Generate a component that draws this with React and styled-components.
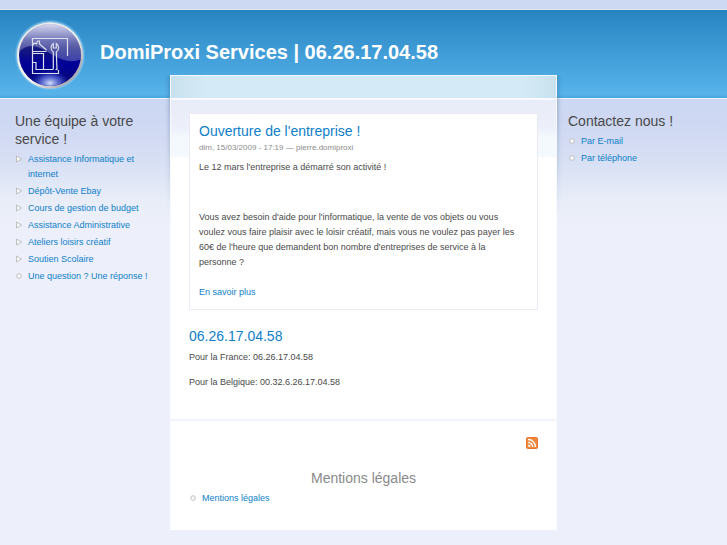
import React from 'react';
import styled, { createGlobalStyle } from 'styled-components';

const Global = createGlobalStyle`
  * { box-sizing: border-box; }
  body {
    margin: 0;
    background: #edf0fa;
    color: #494949;
    font: 9px/15px "Liberation Sans", Arial, Helvetica, sans-serif;
  }
  h1, h2, p, ul { margin: 0; padding: 0; font-weight: normal; }
`;

const Page = styled.div`
  min-height: 100vh;
  background: linear-gradient(
    #cdd8f2 0, #cdd8f2 9px, #e2e8f3 9px, #e2e8f3 10px,
    #2582bc 10px, #2d89c6 18px, #57b3ea 94px, #4ba5dc 98px,
    #f1f6fc 98px, #f1f6fc 99px, #ccd7f2 99px, #ced8f2 122px,
    #d7dff4 160px, #dfe6f6 180px, #e8edf8 200px, #edf0fa 225px, #edf0fa 100%
  );
`;

const Header = styled.header`
  display: flex;
  align-items: flex-start;
  gap: 14px;
  height: 98px;
  padding: 20px 15px 0;
`;

const SiteName = styled.h1`
  padding-top: 20px;
  font-size: 20px;
  line-height: 24px;
  a { color: #fff; font-weight: bold; text-decoration: none; }
`;

const Columns = styled.div`
  display: grid;
  grid-template-columns: 170px minmax(0, 1fr) 170px;
  align-items: start;
  margin-top: -23px;
  padding-bottom: 14px;
`;

const Sidebar = styled.aside`
  padding: ${(p) => (p.$right ? '37px 15px 0 11px' : '37px 18px 0 15px')};
`;

const Title = styled.h2`
  font-size: 14px;
  line-height: 18px;
  color: ${(p) => (p.$muted ? '#898989' : '#494949')};
  text-align: ${(p) => (p.$muted ? 'center' : 'left')};
`;

const Link = styled.a`
  color: #0f80c8;
  text-decoration: none;
`;

const Menu = styled.ul`
  display: grid;
  gap: 2px;
  margin-top: 4px;
  list-style: none;
`;

const MenuItem = styled.li`
  display: flex;
  gap: 5px;
  svg { flex: none; margin-top: 3px; }
`;

const Panel = styled.main`
  position: relative;
  border: solid #f8faff;
  border-width: 1px 1px 0;
  background:
    linear-gradient(90deg, rgba(185, 212, 225, 0.45), transparent 35px, transparent calc(100% - 35px), rgba(185, 212, 225, 0.45)) 0 0 / 100% 22px no-repeat,
    linear-gradient(#d5eaf7 0, #d5eaf7 22px, #f8faff 22px, #f8faff 24px, #e8ecf8 24px, #edf0fa 52px, #f4f9fd 62px, #f4f9fd 81px, #fff 81px);
  &::before {
    content: "";
    position: absolute;
    inset: -1px -1px auto;
    height: 140px;
    box-shadow: 0 0 5px rgba(30, 75, 120, 0.5);
    clip-path: inset(-6px -6px 0);
    mask-image: linear-gradient(#000 20px, transparent);
    mask-clip: no-clip;
    pointer-events: none;
  }
`;

const Content = styled.div`
  padding: 37px 18px 29px;
`;

const Card = styled.article`
  padding: 8px 14px 9px 9px;
  border: 1px solid #e9eaf6;
  background: #fff;
`;

const NodeTitle = styled.h2`
  font-size: 14px;
  line-height: 19px;
`;

const Meta = styled.div`
  font-size: 8px;
  line-height: 13px;
  color: #8c8c8c;
`;

const Text = styled.p`
  margin-top: ${(p) => p.$gap || 0}px;
`;

const Plain = styled.section`
  padding-top: 17px;
`;

const Footer = styled.footer`
  padding: 16px 18px 24px;
  border-top: 2px solid #f2f4fb;
`;

const FeedRow = styled.div`
  display: flex;
  justify-content: flex-end;
  margin-bottom: 20px;
  a { display: block; height: 12px; }
  svg { display: block; }
`;

const Bullet = ({ arrow }) => (
  <svg width="8" height="8" viewBox="0 0 8 8" fill="#fafbfc" stroke="#bfbfbf" aria-hidden="true">
    {arrow ? <path d="M1.500 1v6L6.500 4z" strokeLinejoin="round" /> : <circle cx="4" cy="4" r="2.300" />}
  </svg>
);

const Logo = () => (
  <svg width="71" height="71" viewBox="0 0 71 71" role="img" aria-label="Accueil">
    <defs>
      <radialGradient id="halo">
        <stop offset="0.9" stopColor="#c5e8fb" stopOpacity="0.9" />
        <stop offset="1" stopColor="#8fcdf0" stopOpacity="0" />
      </radialGradient>
      <linearGradient id="rim" x1="0" y1="0" x2="1" y2="1">
        <stop offset="0" stopColor="#e9e6e2" />
        <stop offset="0.55" stopColor="#f7f5ef" />
        <stop offset="1" stopColor="#817f92" />
      </linearGradient>
      <linearGradient id="ball" x1="0" y1="0" x2="0" y2="1">
        <stop offset="0" stopColor="#8a8fca" />
        <stop offset="0.4" stopColor="#15187c" />
        <stop offset="0.65" stopColor="#000098" />
        <stop offset="1" stopColor="#080870" />
      </linearGradient>
      <linearGradient id="gloss" x1="0" y1="0" x2="0" y2="1">
        <stop offset="0" stopColor="#fff" stopOpacity="0.8" />
        <stop offset="0.5" stopColor="#aeb3dd" stopOpacity="0.45" />
        <stop offset="1" stopColor="#9298d0" stopOpacity="0.4" />
      </linearGradient>
      <radialGradient id="glow">
        <stop offset="0" stopColor="#d6e2ff" />
        <stop offset="0.5" stopColor="#6d83ec" stopOpacity="0.65" />
        <stop offset="1" stopColor="#2030c0" stopOpacity="0" />
      </radialGradient>
      <clipPath id="disc"><circle cx="35" cy="35" r="31" /></clipPath>
    </defs>
    <circle cx="35" cy="35" r="35.500" fill="url(#halo)" />
    <circle cx="35" cy="35.500" r="33" fill="url(#rim)" />
    <circle cx="35" cy="35" r="31" fill="url(#ball)" />
    <g clipPath="url(#disc)">
      <ellipse cx="35" cy="63" rx="20" ry="13" fill="url(#glow)" />
      <path d="M3 0h65v38C58 44 48 41 38 35S15 19 3 33z" fill="url(#gloss)" />
    </g>
    <g fill="none" stroke="#dce0ee" strokeWidth="1.200">
      <path d="M52.500 36V18.500H17.500V53.500H43.500V50" />
      <path d="M17.500 25l2-2 2 1 1-3h2v3l7 6M17.500 31.500h14M17.500 33.500h11v16M17.500 42.500h3.500v7h17" />
      <path d="M38.300 49.500V32q-2.300-1.500-2.300-4.500 0-2.500 2.300-4v4.500h3v-4.500q2.300 1.500 2.300 4 0 3-2.300 4.500l.7 17.500" />
      <path d="M40.500 49.500h2" />
    </g>
  </svg>
);

const Rss = () => (
  <svg width="12" height="12" viewBox="0 0 12 12" aria-hidden="true">
    <rect width="12" height="12" rx="2" fill="#e8762d" />
    <rect x="1" y="1" width="10" height="10" rx="1" fill="#ed8a3f" />
    <circle cx="3.300" cy="8.800" r="1.200" fill="#fff" />
    <path d="M2 5.300a4.700 4.700 0 0 1 4.700 4.700M2 2.500a7.500 7.500 0 0 1 7.500 7.500" fill="none" stroke="#fff" strokeWidth="1.300" />
  </svg>
);

const services = [
  'Assistance Informatique et internet',
  'Dépôt-Vente Ebay',
  'Cours de gestion de budget',
  'Assistance Administrative',
  'Ateliers loisirs créatif',
  'Soutien Scolaire',
];

const Entry = ({ label, arrow }) => (
  <MenuItem><Bullet arrow={arrow} /><Link href="#">{label}</Link></MenuItem>
);

export default function App() {
  return (
    <Page>
      <Global />
      <Header>
        <a href="#"><Logo /></a>
        <SiteName><a href="#">DomiProxi Services | 06.26.17.04.58</a></SiteName>
      </Header>
      <Columns>
        <Sidebar>
          <Title>Une équipe à votre service !</Title>
          <Menu>
            {services.map((s) => <Entry key={s} label={s} arrow />)}
            <Entry label="Une question ? Une réponse !" />
          </Menu>
        </Sidebar>
        <Panel>
          <Content>
            <Card>
              <NodeTitle><Link href="#">Ouverture de l'entreprise !</Link></NodeTitle>
              <Meta>dim, 15/03/2009 - 17:19 — pierre.domiproxi</Meta>
              <Text $gap={6}>Le 12 mars l'entreprise a démarré son activité !</Text>
              <Text $gap={35}>
                Vous avez besoin d'aide pour l'informatique, la vente de vos objets ou vous voulez vous
                faire plaisir avec le loisir créatif, mais vous ne voulez pas payer les 60€ de l'heure
                que demandent bon nombre d'entreprises de service à la personne ?
              </Text>
              <Text $gap={15}><Link href="#">En savoir plus</Link></Text>
            </Card>
            <Plain>
              <NodeTitle><Link href="#">06.26.17.04.58</Link></NodeTitle>
              <Text $gap={4}>Pour la France: 06.26.17.04.58</Text>
              <Text $gap={10}>Pour la Belgique: 00.32.6.26.17.04.58</Text>
            </Plain>
          </Content>
          <Footer>
            <FeedRow><a href="#" aria-label="Syndiquer le contenu"><Rss /></a></FeedRow>
            <Title $muted>Mentions légales</Title>
            <Menu><Entry label="Mentions légales" /></Menu>
          </Footer>
        </Panel>
        <Sidebar $right>
          <Title>Contactez nous !</Title>
          <Menu>
            <Entry label="Par E-mail" />
            <Entry label="Par téléphone" />
          </Menu>
        </Sidebar>
      </Columns>
    </Page>
  );
}
